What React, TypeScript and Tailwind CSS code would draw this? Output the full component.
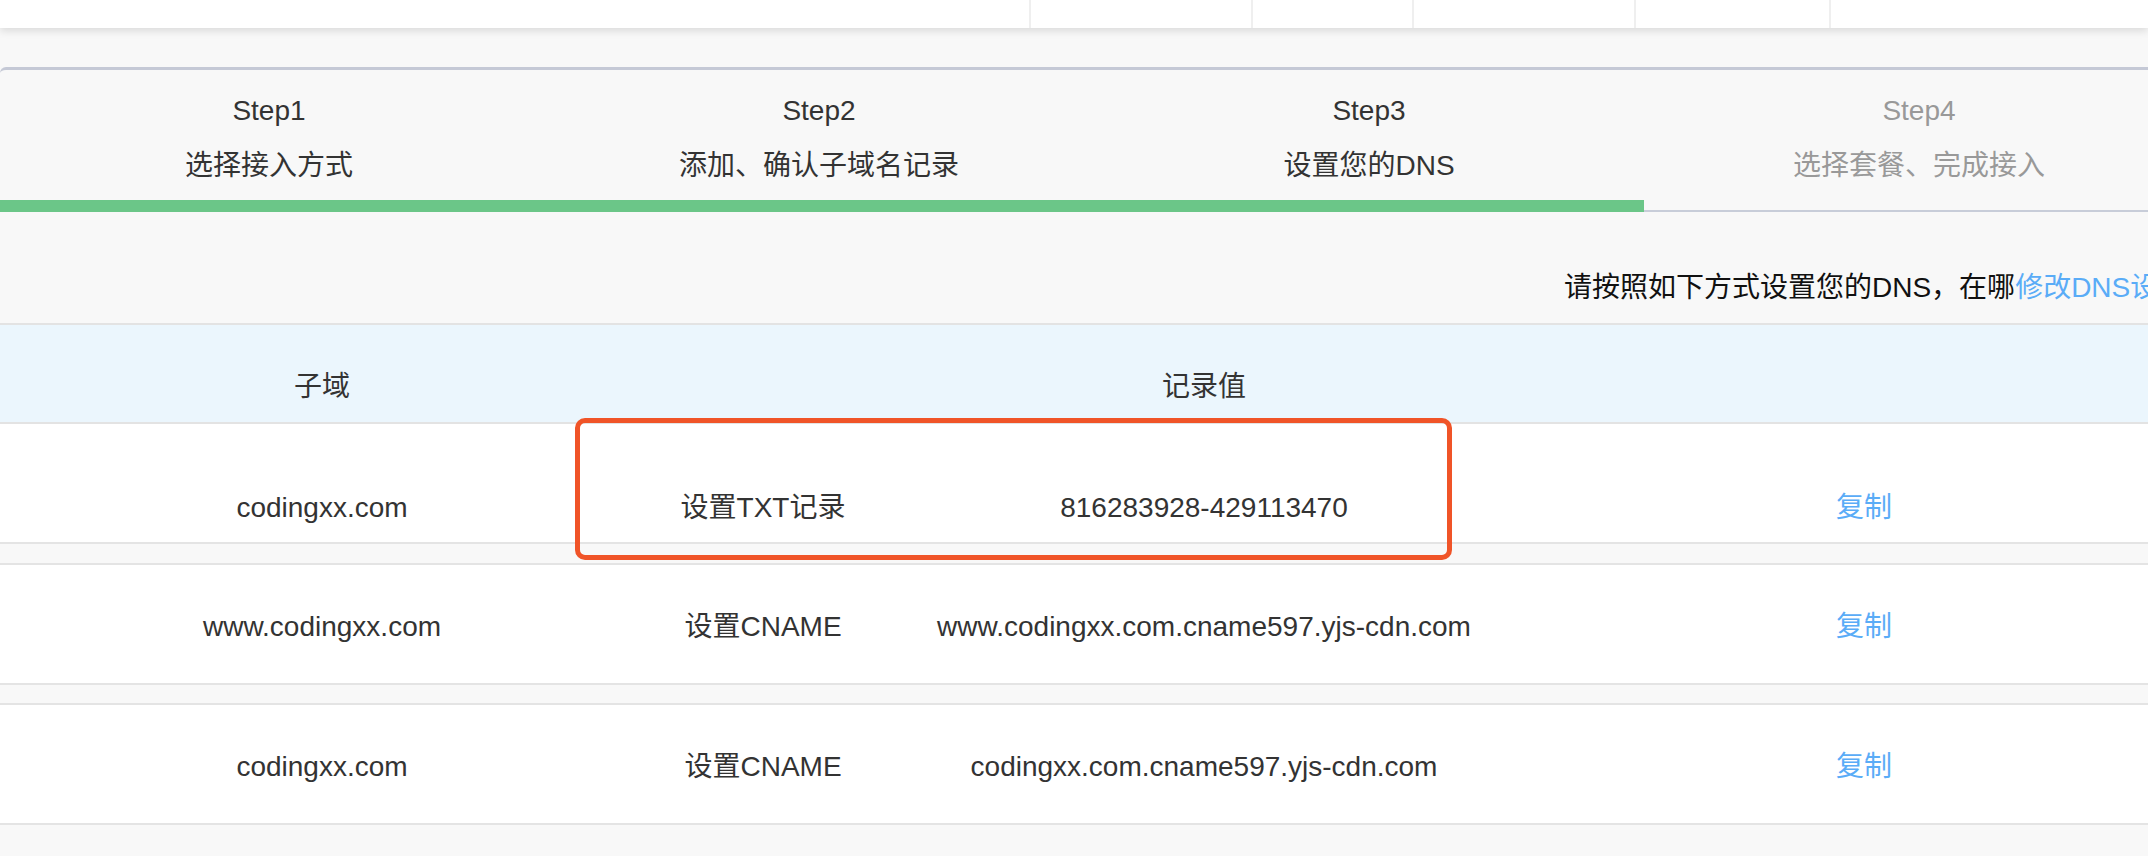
import React from "react";

const steps = [
  { step: "Step1", label: "选择接入方式", done: true, w: "w-[544px] pr-[6px]" },
  { step: "Step2", label: "添加、确认子域名记录", done: true, w: "w-[550px]" },
  { step: "Step3", label: "设置您的DNS", done: true, w: "w-[550px]" },
  { step: "Step4", label: "选择套餐、完成接入", done: false, w: "w-[550px]" },
];

const records = [
  { host: "codingxx.com", type: "设置TXT记录", value: "816283928-429113470" },
  { host: "www.codingxx.com", type: "设置CNAME", value: "www.codingxx.com.cname597.yjs-cdn.com" },
  { host: "codingxx.com", type: "设置CNAME", value: "codingxx.com.cname597.yjs-cdn.com" },
];

function Row({ r, first }: { r: (typeof records)[number]; first: boolean }) {
  return (
    <div
      className={`flex h-[120px] border-b-2 border-[#e4e4e4] bg-white leading-[40px] ${
        first ? "pt-[64px]" : "pt-[42px]"
      }`}
    >
      <div className="w-[644px] shrink-0 text-center">{r.host}</div>
      <div className="w-[238px] shrink-0 text-center">{r.type}</div>
      <div className="w-[644px] shrink-0 text-center">{r.value}</div>
      <div className="w-[676px] shrink-0 text-center text-[#5aacf7]">复制</div>
    </div>
  );
}

export default function App() {
  return (
    <div
      className="relative h-[856px] w-[2148px] overflow-hidden bg-[#f8f8f8] text-[28px] text-[#333]"
      style={{ fontFamily: '"Liberation Sans", "Noto Sans CJK SC", sans-serif' }}
    >
      {/* top bar */}
      <div className="relative z-10 flex h-[28px] bg-white shadow-[0_3px_8px_rgba(0,0,0,0.12)]">
        <div className="w-[1029px] shrink-0" />
        <div className="w-[222px] shrink-0 border-l-2 border-[#efefef]" />
        <div className="w-[161px] shrink-0 border-l-2 border-[#efefef]" />
        <div className="w-[222px] shrink-0 border-l-2 border-[#efefef]" />
        <div className="w-[195px] shrink-0 border-l-2 border-[#efefef]" />
        <div className="flex-1 border-l-2 border-[#efefef]" />
      </div>

      {/* steps */}
      <div className="mt-[39px] rounded-tl-[6px] border-t-[3px] border-[#c5c9d6]">
        <div className="flex h-[130px]">
          {steps.map((s) => (
            <div
              key={s.step}
              className={`${s.w} shrink-0 pt-[21px] text-center leading-[40px] ${
                s.done ? "text-[#333]" : "text-[#999]"
              }`}
            >
              <div>{s.step}</div>
              <div className="mt-[15px]">{s.label}</div>
            </div>
          ))}
        </div>
        <div className="flex h-[12px]">
          <div className="h-full w-[1644px] shrink-0 bg-[#6bc688]" />
          <div className="h-[2px] flex-1 self-end bg-[#c8cdd9]" />
        </div>
      </div>

      {/* hint */}
      <div className="h-[113px] border-b-2 border-[#e3e3e3] pt-[56px] pl-[1564px] leading-[40px] whitespace-nowrap text-[#111]">
        请按照如下方式设置您的DNS，在哪<span className="text-[#5aacf7]">修改DNS设置？</span>
      </div>

      {/* table header */}
      <div className="flex h-[99px] border-b-2 border-[#e3e3e3] bg-[#ebf6fd] pt-[42px] leading-[40px]">
        <div className="w-[644px] shrink-0 text-center">子域</div>
        <div className="w-[238px] shrink-0" />
        <div className="w-[644px] shrink-0 text-center">记录值</div>
      </div>

      <Row r={records[0]} first />
      <div className="h-[21px] border-b-2 border-[#e4e4e4]" />
      <Row r={records[1]} first={false} />
      <div className="h-[20px] border-b-2 border-[#e4e4e4]" />
      <Row r={records[2]} first={false} />

      {/* highlight */}
      <div className="absolute top-[418px] left-[575px] h-[142px] w-[877px] rounded-[10px] border-[5px] border-[#f05428]" />
    </div>
  );
}
